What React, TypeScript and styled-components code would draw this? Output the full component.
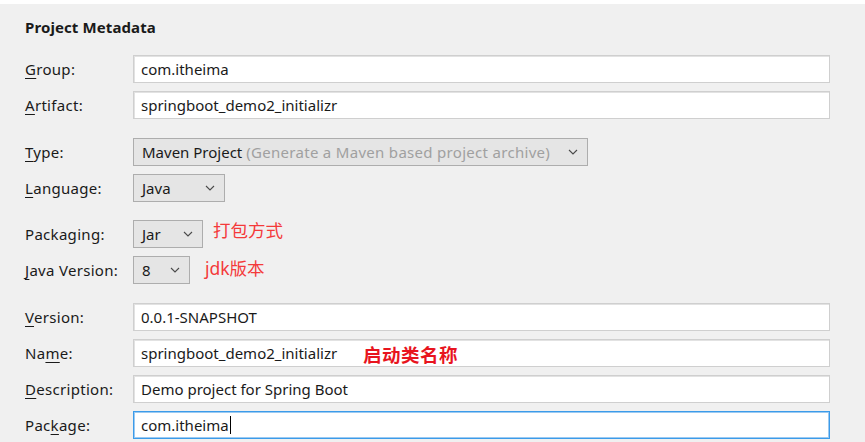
import styled, { createGlobalStyle } from "styled-components";

const GlobalStyle = createGlobalStyle`
  html, body {
    margin: 0;
    padding: 0;
    background: #f0f0f0;
  }
  body {
    font-family: "Noto Sans", "Noto Sans CJK SC", sans-serif;
    color: #1a1a1a;
  }
`;

const Panel = styled.div`
  width: 865px;
  height: 442px;
  box-sizing: border-box;
  border-top: 4px solid #ffffff;
  padding: 0 35px 0 25px;
  overflow: hidden;
`;

const Title = styled.h2`
  margin: 0;
  padding: 13px 0 0 0;
  height: 51px;
  box-sizing: border-box;
  font-size: 15px;
  font-weight: 700;
  letter-spacing: 0.1px;
`;

const Section = styled.div<{ $gap: number }>`
  display: grid;
  grid-template-columns: 108px 1fr;
  row-gap: 8px;
  align-items: center;
  margin-bottom: ${(p) => p.$gap}px;
`;

const Label = styled.label`
  font-size: 15px;
  letter-spacing: 0.3px;
  line-height: 28px;
  white-space: nowrap;
`;

const Key = styled.span`
  text-decoration: underline;
  text-underline-offset: 3px;
`;

const Value = styled.div`
  display: flex;
  align-items: center;
  position: relative;
`;

const Field = styled.div<{ $focus?: boolean }>`
  flex: 1;
  height: 28px;
  box-sizing: border-box;
  background: #ffffff;
  border: 1px solid ${(p) => (p.$focus ? "#3b9bea" : "#cfcfcf")};
  box-shadow: ${(p) =>
    p.$focus ? "inset 0 0 0 1px #9ccaf1" : "inset 1px 1px 0 #e2e2e2"};
  padding: 0 7px;
  font-size: 15px;
  line-height: 26px;
  white-space: nowrap;
  display: flex;
  align-items: center;
`;

const Caret = styled.span`
  display: inline-block;
  width: 1px;
  height: 18px;
  background: #000;
  margin-left: 1px;
`;

const Select = styled.div<{ $w: number }>`
  width: ${(p) => p.$w}px;
  height: 28px;
  box-sizing: border-box;
  background: #e5e5e5;
  border: 1px solid #adadad;
  padding: 0 9px 0 8px;
  display: flex;
  align-items: center;
  justify-content: space-between;
  font-size: 15px;
  white-space: nowrap;
`;

const Hint = styled.span`
  color: #a0a0a0;
  letter-spacing: 0.3px;
`;

const Chevron = () => (
  <svg width="10" height="6" viewBox="0 0 10 6">
    <polyline
      points="1,1 5,5 9,1"
      fill="none"
      stroke="#4a4a4a"
      strokeWidth="1.1"
    />
  </svg>
);

const Note = styled.span<{ $dx: number; $dy: number }>`
  margin-left: ${(p) => p.$dx}px;
  margin-top: ${(p) => p.$dy}px;
  color: #f43a3a;
  font-size: 17.5px;
  white-space: nowrap;
`;

const NameNote = styled.span`
  position: absolute;
  left: 230px;
  top: 2px;
  color: #e8141e;
  font-size: 18.5px;
  font-weight: 700;
  letter-spacing: 0.5px;
`;

function App() {
  return (
    <>
      <GlobalStyle />
      <Panel>
        <Title>Project Metadata</Title>

        <Section $gap={19}>
          <Label>
            <Key>G</Key>roup:
          </Label>
          <Value>
            <Field>com.itheima</Field>
          </Value>
          <Label>
            <Key>A</Key>rtifact:
          </Label>
          <Value>
            <Field>springboot_demo2_initializr</Field>
          </Value>
        </Section>

        <Section $gap={18}>
          <Label>
            <Key>T</Key>ype:
          </Label>
          <Value>
            <Select $w={455}>
              <span>
                Maven Project <Hint>(Generate a Maven based project archive)</Hint>
              </span>
              <Chevron />
            </Select>
          </Value>
          <Label>
            <Key>L</Key>anguage:
          </Label>
          <Value>
            <Select $w={92}>
              <span>Java</span>
              <Chevron />
            </Select>
          </Value>
        </Section>

        <Section $gap={19}>
          <Label>Packaging:</Label>
          <Value>
            <Select $w={70}>
              <span>Jar</span>
              <Chevron />
            </Select>
            <Note $dx={10} $dy={-10}>打包方式</Note>
          </Value>
          <Label>
            <Key>J</Key>ava Version:
          </Label>
          <Value>
            <Select $w={57}>
              <span>8</span>
              <Chevron />
            </Select>
            <Note $dx={15} $dy={-6}>jdk版本</Note>
          </Value>
        </Section>

        <Section $gap={0}>
          <Label>
            <Key>V</Key>ersion:
          </Label>
          <Value>
            <Field>0.0.1-SNAPSHOT</Field>
          </Value>
          <Label>
            Na<Key>m</Key>e:
          </Label>
          <Value>
            <Field>springboot_demo2_initializr</Field>
            <NameNote>启动类名称</NameNote>
          </Value>
          <Label>
            <Key>D</Key>escription:
          </Label>
          <Value>
            <Field>Demo project for Spring Boot</Field>
          </Value>
          <Label>
            Pac<Key>k</Key>age:
          </Label>
          <Value>
            <Field $focus>
              com.itheima
              <Caret />
            </Field>
          </Value>
        </Section>
      </Panel>
    </>
  );
}

export default App;
